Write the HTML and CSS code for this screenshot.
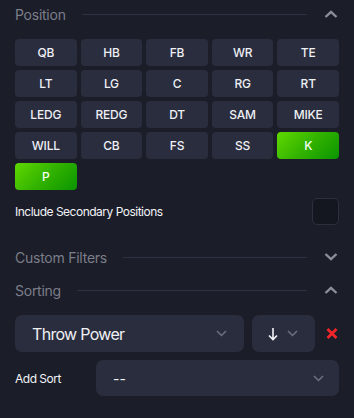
FILE: index.html
```html
<!DOCTYPE html>
<html lang="en">
  <head>
    <meta charset="UTF-8" />
    <title>Filters</title>
    <link rel="stylesheet" href="styles.css">
  </head>
  <body>
    <div class="panel">
      <div class="section-head">
        <span class="section-title">Position</span>
        <span class="rule"></span>
        <svg class="chev" width="14" height="8" viewBox="0 0 14 8"><path d="M1.5 7 L7 1.8 L12.5 7" fill="none" stroke="#8b8e9b" stroke-width="2.4"/></svg>
      </div>

      <div class="pos-grid">
        <button class="pos">QB</button>
        <button class="pos">HB</button>
        <button class="pos">FB</button>
        <button class="pos">WR</button>
        <button class="pos">TE</button>
        <button class="pos">LT</button>
        <button class="pos">LG</button>
        <button class="pos">C</button>
        <button class="pos">RG</button>
        <button class="pos">RT</button>
        <button class="pos">LEDG</button>
        <button class="pos">REDG</button>
        <button class="pos">DT</button>
        <button class="pos">SAM</button>
        <button class="pos">MIKE</button>
        <button class="pos">WILL</button>
        <button class="pos">CB</button>
        <button class="pos">FS</button>
        <button class="pos">SS</button>
        <button class="pos active">K</button>
        <button class="pos active">P</button>
      </div>

      <div class="check-row">
        <span>Include Secondary Positions</span>
        <span class="checkbox"></span>
      </div>

      <div class="section-head custom">
        <span class="section-title">Custom Filters</span>
        <span class="rule"></span>
        <svg class="chev" width="14" height="8" viewBox="0 0 14 8"><path d="M1.5 1 L7 6.2 L12.5 1" fill="none" stroke="#8b8e9b" stroke-width="2.4"/></svg>
      </div>

      <div class="section-head sorting">
        <span class="section-title">Sorting</span>
        <span class="rule"></span>
        <svg class="chev" width="14" height="8" viewBox="0 0 14 8"><path d="M1.5 7 L7 1.8 L12.5 7" fill="none" stroke="#8b8e9b" stroke-width="2.4"/></svg>
      </div>

      <div class="sort-row">
        <div class="select big">
          <span>Throw Power</span>
          <svg width="11" height="7" viewBox="0 0 11 7"><path d="M1 1 L5.5 5.5 L10 1" fill="none" stroke="#6d7080" stroke-width="1.5"/></svg>
        </div>
        <div class="select dir">
          <svg width="10" height="14" viewBox="0 0 10 14"><path d="M5 1 V12.5 M1 8.5 L5 12.5 L9 8.5" fill="none" stroke="#f2f3f7" stroke-width="1.6"/></svg>
          <svg width="11" height="7" viewBox="0 0 11 7"><path d="M1 1 L5.5 5.5 L10 1" fill="none" stroke="#6d7080" stroke-width="1.5"/></svg>
        </div>
        <svg class="remove" width="12" height="11" viewBox="0 0 12 11"><path d="M1.5 1 L10.5 10 M10.5 1 L1.5 10" stroke="#f0262b" stroke-width="2.8"/></svg>
      </div>

      <div class="add-row">
        <span class="add-label">Add Sort</span>
        <div class="select add">
          <span>--</span>
          <svg width="11" height="7" viewBox="0 0 11 7"><path d="M1 1 L5.5 5.5 L10 1" fill="none" stroke="#6d7080" stroke-width="1.5"/></svg>
        </div>
      </div>
    </div>
  </body>
</html>
```

FILE: styles.css
```css
body {
  margin: 0;
  background-color: #1b1d28;
  font-family: Inter, "Noto Sans", sans-serif;
  color: #eceef3;
}
.panel {
  padding: 0 15px;
}
.section-head {
  display: flex;
  align-items: center;
  height: 28px;
}
.section-title {
  font-size: 14px;
  letter-spacing: -0.25px;
  color: #7b7e8b;
}
.rule {
  flex: 1;
  height: 1px;
  background-color: #2e3141;
  margin: 0 17px 0 16px;
}
.chev {
  margin-right: 1px;
}
.pos-grid {
  display: grid;
  grid-template-columns: repeat(5, 1fr);
  column-gap: 4px;
  row-gap: 4px;
  margin-top: 11px;
}
.pos {
  height: 27px;
  border: none;
  border-radius: 4px;
  background-color: #2a2d3d;
  color: #eef0f5;
  font-family: Inter, "Noto Sans", sans-serif;
  font-size: 12px;
  font-weight: 500;
  letter-spacing: -0.2px;
  padding: 0;
}
.pos.active {
  background: linear-gradient(135deg, #5fd800 0%, #33b300 50%, #0a9400 100%);
  color: #f4fff0;
}
.check-row {
  display: flex;
  justify-content: space-between;
  align-items: center;
  margin-top: 8px;
  font-size: 12px;
  letter-spacing: -0.5px;
  color: #f2f3f7;
}
.checkbox {
  width: 25px;
  height: 25px;
  border: 1px solid #2c2f3e;
  border-radius: 5px;
  background-color: #151720;
}
.section-head.custom {
  margin-top: 18px;
}
.section-head.sorting {
  margin-top: 5px;
}
.sort-row {
  display: flex;
  align-items: center;
  margin-top: 11px;
}
.select {
  display: flex;
  align-items: center;
  justify-content: space-between;
  background-color: #2a2d3d;
  border-radius: 7px;
  box-sizing: border-box;
}
.select.big {
  width: 229px;
  height: 37px;
  padding: 0 17px 0 17px;
  font-size: 16px;
  letter-spacing: -0.7px;
  color: #f0f1f5;
}
.select.dir {
  width: 63px;
  height: 37px;
  margin-left: 8px;
  padding: 0 17px 0 16px;
}
.remove {
  margin-left: 11px;
}
.add-row {
  display: flex;
  align-items: center;
  margin-top: 8px;
}
.add-label {
  width: 81px;
  font-size: 12px;
  letter-spacing: -0.5px;
  color: #f2f3f7;
}
.select.add {
  flex: 1;
  height: 36px;
  padding: 0 15px 0 17px;
  font-size: 14px;
  color: #f0f1f5;
}
```
